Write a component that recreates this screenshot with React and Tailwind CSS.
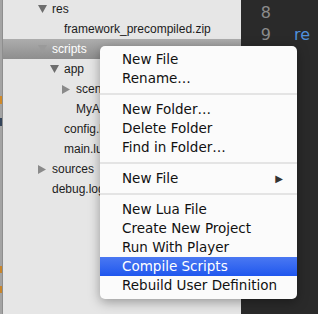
import React from 'react';

const tree = [
  { label: 'res', depth: 0, arrow: 'down' },
  { label: 'framework_precompiled.zip', depth: 1 },
  { label: 'scripts', depth: 0, arrow: 'down', selected: true },
  { label: 'app', depth: 1, arrow: 'down' },
  { label: 'scenes', depth: 2, arrow: 'right' },
  { label: 'MyApp.lua', depth: 2 },
  { label: 'config.lua', depth: 1 },
  { label: 'main.lua', depth: 1 },
  { label: 'sources', depth: 0, arrow: 'right' },
  { label: 'debug.log', depth: 0 },
];

const menu = [
  ['New File', 'Rename…'],
  ['New Folder…', 'Delete Folder', 'Find in Folder…'],
  ['New File'],
  ['New Lua File', 'Create New Project', 'Run With Player', 'Compile Scripts', 'Rebuild User Definition'],
];

const Arrow = ({ dir, selected }) => {
  if (!dir) return <span className="w-[14px] shrink-0" />;
  return (
    <span className="w-[14px] shrink-0 flex items-center">
      {dir === 'down' ? (
        <svg width="9" height="8" viewBox="0 0 9 8">
          <path d="M0 0 H9 L4.5 8 Z" fill={selected ? '#9a9a9a' : '#6e6e6e'} />
        </svg>
      ) : (
        <svg width="8" height="9" viewBox="0 0 8 9">
          <path d="M0 0 L8 4.5 L0 9 Z" fill="#8a8a8a" />
        </svg>
      )}
    </span>
  );
};

const TreeRow = ({ item }) => (
  <div
    className={
      'h-[20px] flex items-center whitespace-nowrap ' +
      (item.selected
        ? 'bg-gradient-to-b from-[#adadad] to-[#8e8e8e] text-white'
        : 'text-[#1c1c1c]')
    }
    style={{ paddingLeft: 35 + item.depth * 12 }}
  >
    <Arrow dir={item.arrow} selected={item.selected} />
    <span>{item.label}</span>
  </div>
);

export default function App() {
  return (
    <div className="relative w-[318px] h-[314px] overflow-hidden flex bg-[#e6e6e6] font-['Liberation_Sans',sans-serif]">
      {/* edge of the neighbouring panel */}
      <div className="w-[3px] shrink-0 bg-[#a4a4a4] border-r border-[#8e8e8e] flex flex-col">
        <span className="mt-[96px] h-[8px] bg-[#d08a2a]" />
        <span className="mt-[14px] h-[8px] bg-[#34445a]" />
        <span className="mt-[140px] h-[7px] bg-[#c8862c]" />
        <span className="mt-[13px] h-[7px] bg-[#c8862c]" />
      </div>

      {/* project tree */}
      <div className="w-[238px] shrink-0 text-[12px] -mt-px">
        {tree.map((item, i) => (
          <TreeRow key={i} item={item} />
        ))}
      </div>

      {/* editor */}
      <div className="flex-1 bg-[#2a2a2a] pt-[2px] font-['DejaVu_Sans',sans-serif] text-[16px] leading-[22px]">
        <div className="flex">
          <span className="w-[36px] text-right pr-[6px] text-[#8c8c8c]">8</span>
        </div>
        <div className="flex">
          <span className="w-[36px] text-right pr-[6px] text-[#8c8c8c]">9</span>
          <span className="pl-[17px] text-[#4f8fdc]">re</span>
        </div>
      </div>

      {/* context menu */}
      <div className="absolute left-[100px] top-[46px] w-[197px] bg-[#fbfbfb] rounded-[5px] shadow-[0_3px_12px_rgba(0,0,0,0.35)] py-[4px] font-['DejaVu_Sans',sans-serif] text-[13.5px] text-[#111]">
        {menu.map((group, gi) => (
          <div key={gi}>
            {gi > 0 && <div className="my-[5px] h-[2px] bg-[#e4e4e4]" />}
            {group.map((label, li) => {
              const active = label === 'Compile Scripts';
              const sub = gi === 2;
              return (
                <div
                  key={li}
                  className={
                    'h-[19px] flex items-center pl-[22px] pr-[14px] whitespace-nowrap ' +
                    (active ? 'bg-gradient-to-b from-[#4a78f2] to-[#1f56ee] text-white' : '')
                  }
                >
                  <span className="flex-1">{label}</span>
                  {sub && <span className="text-[10px] text-[#333]">▶</span>}
                </div>
              );
            })}
          </div>
        ))}
      </div>
    </div>
  );
}
